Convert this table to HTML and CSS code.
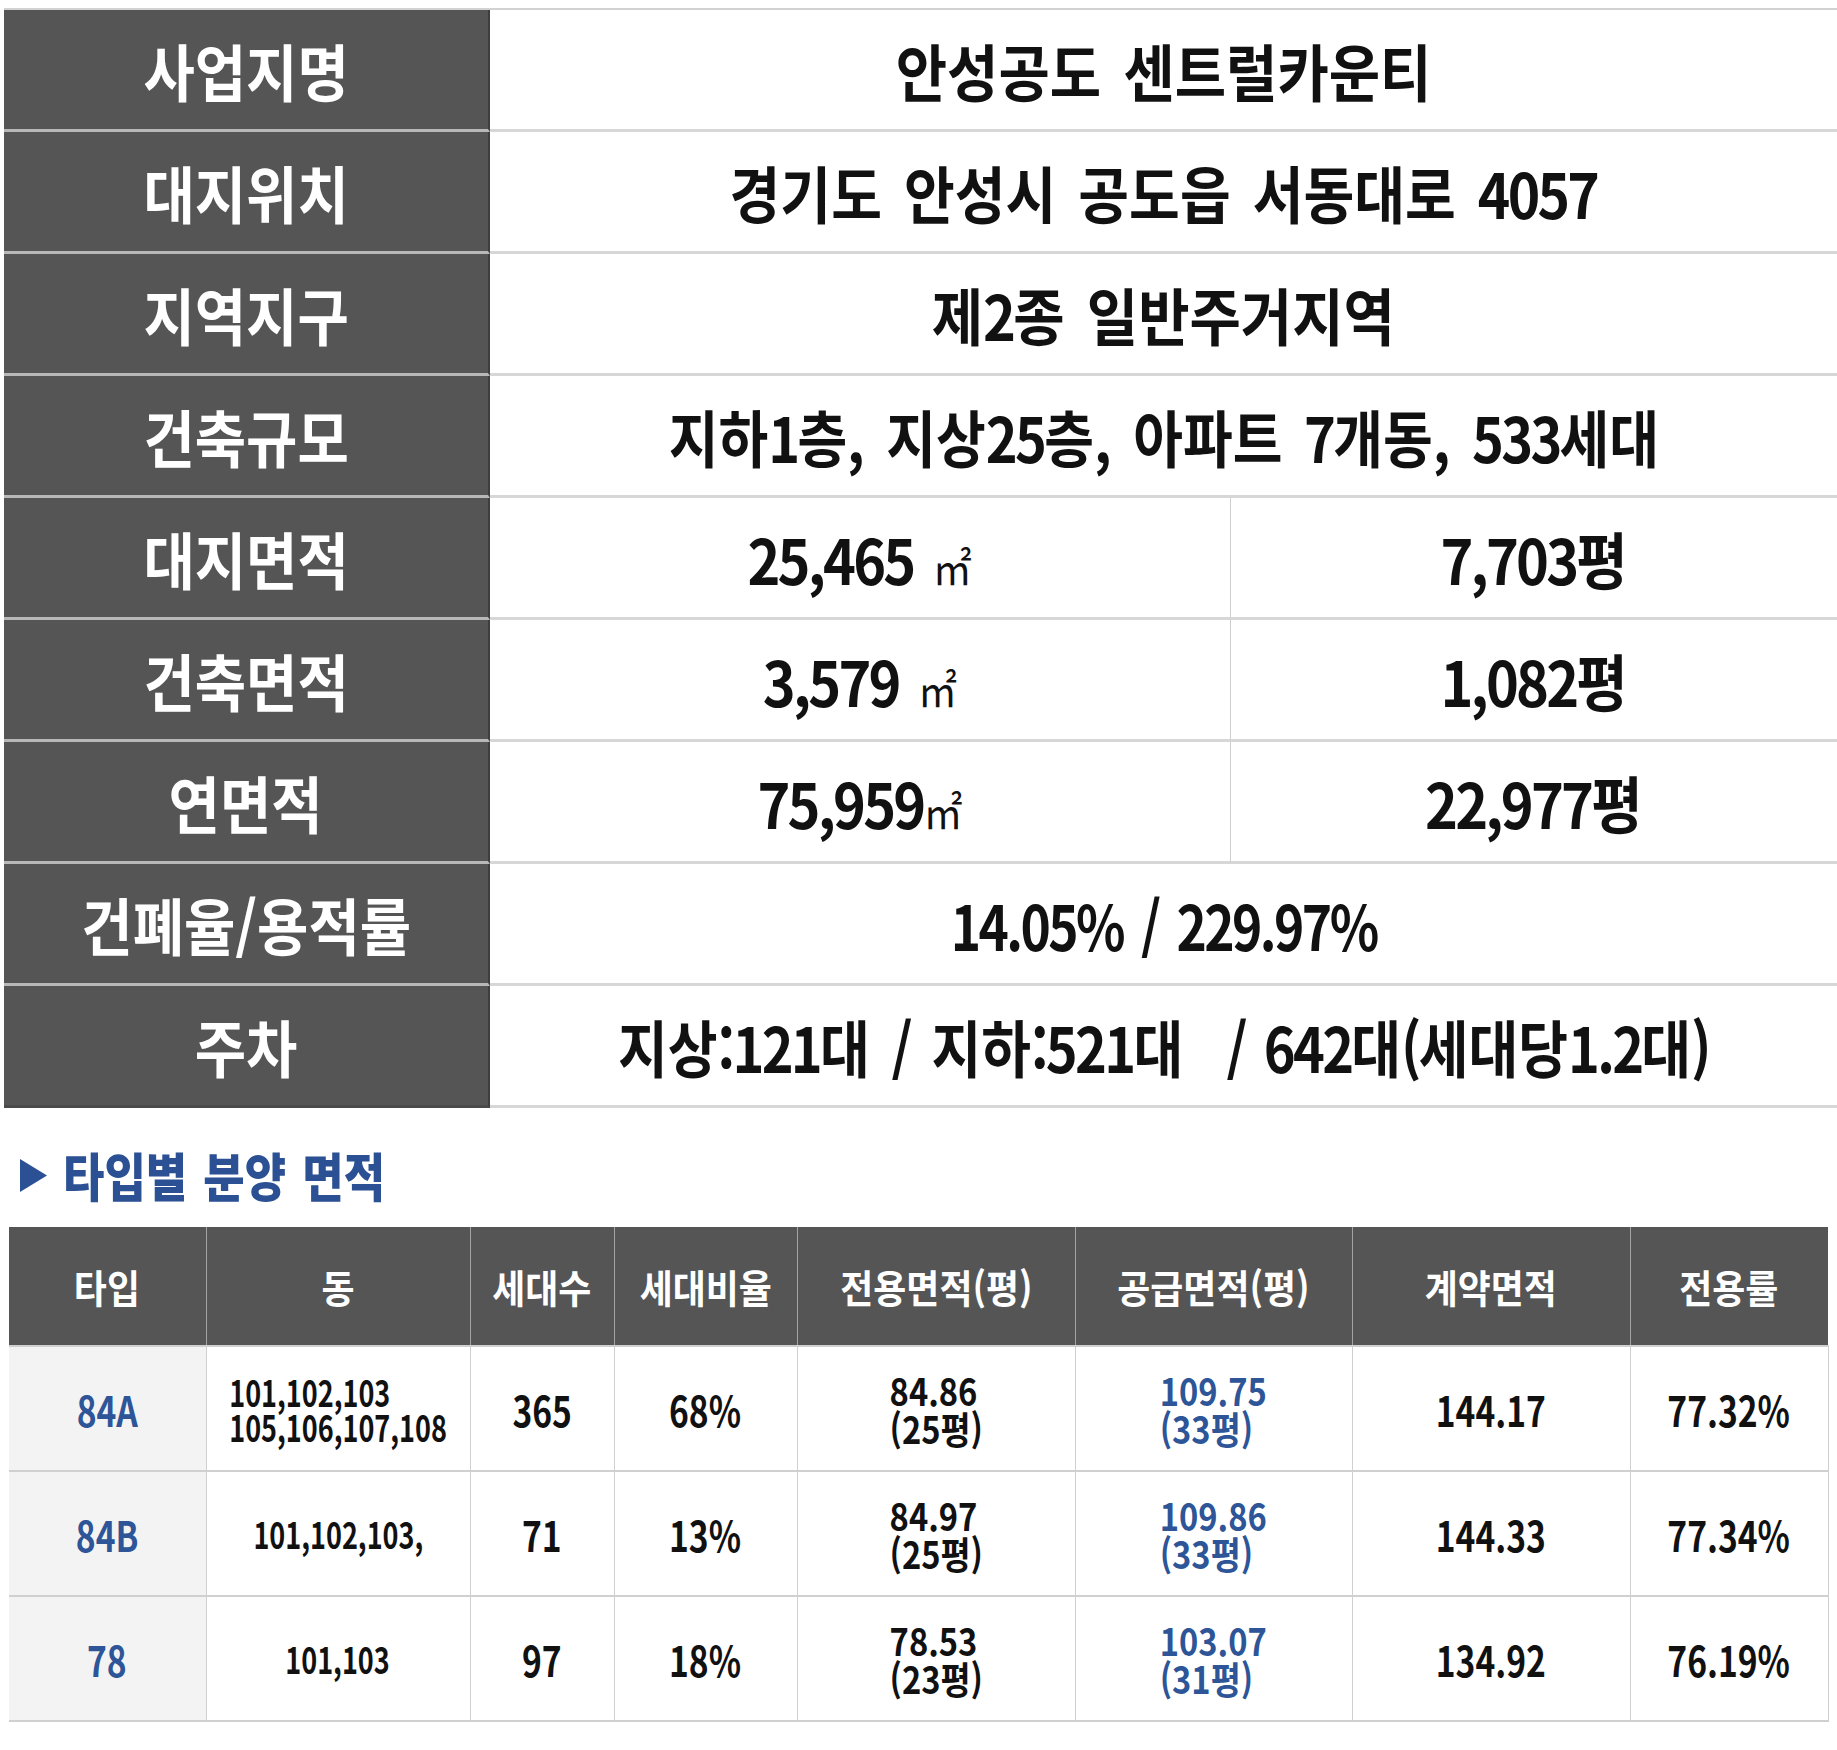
FILE: index.html
```html
<!DOCTYPE html>
<html lang="ko">
<head>
<meta charset="utf-8">
<title>안성공도 센트럴카운티</title>
<link rel="stylesheet" href="styles.css">
</head>
<body>
<div class="info">
  <div class="lab"><span class="t">사업지명</span></div>
  <div class="val span2"><span class="t">안성공도 센트럴카운티</span></div>

  <div class="lab"><span class="t">대지위치</span></div>
  <div class="val span2"><span class="t snug">경기도 안성시 공도읍 서동대로 <span class="n">4057</span></span></div>

  <div class="lab"><span class="t">지역지구</span></div>
  <div class="val span2"><span class="t">제<span class="n">2</span>종 일반주거지역</span></div>

  <div class="lab"><span class="t">건축규모</span></div>
  <div class="val span2"><span class="t tight">지하<span class="n">1</span>층, 지상<span class="n">25</span>층, 아파트 <span class="n">7</span>개동, <span class="n">533</span>세대</span></div>

  <div class="lab"><span class="t">대지면적</span></div>
  <div class="val split"><span class="t"><span class="n">25,465</span> <span class="m2">㎡</span></span></div>
  <div class="val"><span class="t"><span class="n">7,703</span>평</span></div>

  <div class="lab"><span class="t">건축면적</span></div>
  <div class="val split"><span class="t"><span class="n">3,579</span> <span class="m2">㎡</span></span></div>
  <div class="val"><span class="t"><span class="n">1,082</span>평</span></div>

  <div class="lab"><span class="t">연면적</span></div>
  <div class="val split"><span class="t"><span class="n">75,959</span><span class="m2">㎡</span></span></div>
  <div class="val"><span class="t"><span class="n">22,977</span>평</span></div>

  <div class="lab"><span class="t">건폐율/용적률</span></div>
  <div class="val span2"><span class="t tighter"><span class="n">14.05% / 229.97%</span></span></div>

  <div class="lab end"><span class="t">주차</span></div>
  <div class="val span2"><span class="t tight">지상<span class="n">:121</span>대 <span class="n">/</span> 지하<span class="n">:521</span>대 &nbsp;<span class="n">/ 642</span>대<span class="n">(</span>세대당<span class="n">1.2</span>대<span class="n">)</span></span></div>
</div>

<h2 class="sec">
  <svg viewBox="0 0 27 33" aria-hidden="true"><polygon points="0,0 27,16.5 0,33"/></svg>
  <span class="t">타입별 분양 면적</span>
</h2>

<table class="types">
  <colgroup>
    <col style="width:197px"><col style="width:264px"><col style="width:144px"><col style="width:183px">
    <col style="width:278px"><col style="width:277px"><col style="width:278px"><col style="width:198px">
  </colgroup>
  <thead>
    <tr>
      <th><div class="c"><span class="t">타입</span></div></th>
      <th><div class="c"><span class="t">동</span></div></th>
      <th><div class="c"><span class="t">세대수</span></div></th>
      <th><div class="c"><span class="t">세대비율</span></div></th>
      <th><div class="c"><span class="t">전용면적(평)</span></div></th>
      <th><div class="c"><span class="t">공급면적(평)</span></div></th>
      <th><div class="c"><span class="t">계약면적</span></div></th>
      <th><div class="c"><span class="t">전용률</span></div></th>
    </tr>
  </thead>
  <tbody>
    <tr>
      <td class="type"><div class="c"><span class="t">84A</span></div></td>
      <td class="dong"><div class="c"><span class="t">101,102,103<br>105,106,107,108</span></div></td>
      <td><div class="c"><span class="t">365</span></div></td>
      <td><div class="c"><span class="t">68%</span></div></td>
      <td class="two"><div class="c"><span class="t">84.86<br>(25평)</span></div></td>
      <td class="two blue"><div class="c"><span class="t">109.75<br>(33평)</span></div></td>
      <td><div class="c"><span class="t">144.17</span></div></td>
      <td><div class="c"><span class="t">77.32%</span></div></td>
    </tr>
    <tr>
      <td class="type"><div class="c"><span class="t">84B</span></div></td>
      <td class="dong"><div class="c"><span class="t">101,102,103,</span></div></td>
      <td><div class="c"><span class="t">71</span></div></td>
      <td><div class="c"><span class="t">13%</span></div></td>
      <td class="two"><div class="c"><span class="t">84.97<br>(25평)</span></div></td>
      <td class="two blue"><div class="c"><span class="t">109.86<br>(33평)</span></div></td>
      <td><div class="c"><span class="t">144.33</span></div></td>
      <td><div class="c"><span class="t">77.34%</span></div></td>
    </tr>
    <tr>
      <td class="type"><div class="c"><span class="t">78</span></div></td>
      <td class="dong"><div class="c"><span class="t">101,103</span></div></td>
      <td><div class="c"><span class="t">97</span></div></td>
      <td><div class="c"><span class="t">18%</span></div></td>
      <td class="two"><div class="c"><span class="t">78.53<br>(23평)</span></div></td>
      <td class="two blue"><div class="c"><span class="t">103.07<br>(31평)</span></div></td>
      <td><div class="c"><span class="t">134.92</span></div></td>
      <td><div class="c"><span class="t">76.19%</span></div></td>
    </tr>
  </tbody>
</table>
</body>
</html>
```

FILE: styles.css
```css
* { box-sizing: border-box; margin: 0; padding: 0; }

body {
  background: #fff;
  font-family: "Noto Sans CJK KR", "Noto Sans", sans-serif;
  font-weight: 700;
  color: #111;
  width: 1837px;
}

.t {
  display: inline-block;
  white-space: nowrap;
  transform: scaleX(0.9);
}

/* ---------- project overview ---------- */
.info {
  display: grid;
  grid-template-columns: 486px 741px 1fr;
  grid-auto-rows: 122px;
  margin: 8px 0 0 4px;
  border-top: 2px solid #d2d2d2;
  font-size: 62px;
  line-height: 1;
}

.lab {
  background: #555;
  color: #fff;
  border-right: 2px solid #3e3e3e;
  border-bottom: 3px solid #b8b8b8;
  display: flex;
  align-items: center;
  justify-content: center;
}

.lab.end { border-bottom-color: #4a4a4a; }

.val {
  border-bottom: 3px solid #d7d7d7;
  display: flex;
  align-items: center;
  justify-content: center;
}

.info .t { word-spacing: 0.12em; }
.info .t.snug { transform: scaleX(0.89); }
.info .t.tight { transform: scaleX(0.872); }
.info .t.tighter { transform: scaleX(0.83); }

/* digits and punctuation run tighter than the hangul */
.n { letter-spacing: -0.05em; }

.span2 { grid-column: span 2; }
.split { border-right: 1px solid #cfcfcf; }

.m2 { font-size: 0.7em; font-weight: 400; }

/* ---------- section title ---------- */
.sec {
  display: flex;
  align-items: center;
  height: 52px;
  margin: 41px 0 0 20px;
  color: #2b5093;
  font-size: 52px;
  line-height: 1;
  font-weight: 900;
}

.sec svg {
  flex: none;
  width: 27px;
  height: 33px;
  margin-right: 16px;
  fill: #2b5093;
}

.sec .t {
  transform-origin: left center;
  transform: scaleX(0.865);
  word-spacing: 0.08em;
}

/* ---------- type table ---------- */
.types {
  margin: 26px 0 0 9px;
  width: 1819px;
  border-collapse: collapse;
  table-layout: fixed;
}

.types th {
  background: #555;
  color: #fff;
  height: 119px;
  font-size: 39px;
  line-height: 1;
  font-weight: 700;
  border-left: 1px solid #a3a3a3;
}

.types th:first-child { border-left: none; }

.types td {
  height: 125px;
  border-style: solid;
  border-color: #d0d0d0;
  border-width: 2px 1px;
  font-size: 42px;
  line-height: 37px;
}

.c {
  display: flex;
  justify-content: center;
  align-items: center;
}

.types .t { transform: scaleX(0.8); }
.types th .t { transform: scaleX(0.92); }

.types td.dong {
  font-size: 37px;
  line-height: 35px;
}
.types td.dong .t { transform: scaleX(0.73); }

.types td.two {
  font-size: 38px;
  line-height: 38px;
}
.types td.two .t { transform: scaleX(0.86); }

.types td.type {
  background: #f3f3f3;
  color: #2d5597;
  border-left: none;
}

.types td.blue { color: #2d5597; }
```
